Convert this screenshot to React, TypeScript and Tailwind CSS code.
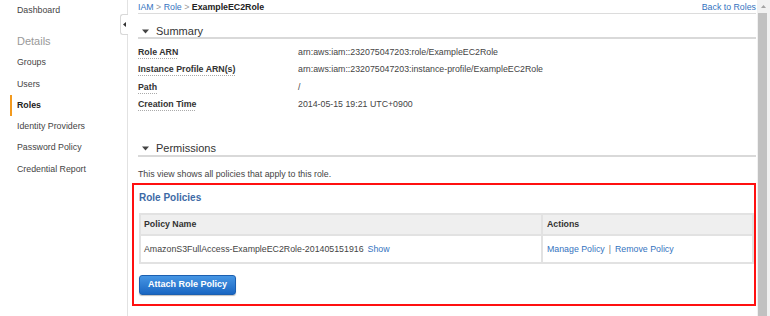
import { ReactNode } from "react";

const navItems = ["Groups", "Users", "Roles", "Identity Providers", "Password Policy", "Credential Report"];

const summaryRows = [
  { label: "Role ARN", value: "arn:aws:iam::232075047203:role/ExampleEC2Role" },
  { label: "Instance Profile ARN(s)", value: "arn:aws:iam::232075047203:instance-profile/ExampleEC2Role" },
  { label: "Path", value: "/" },
  { label: "Creation Time", value: "2014-05-15 19:21 UTC+0900" },
];

function Caret() {
  return (
    <svg width="7" height="5" viewBox="0 0 7 5" className="mr-[7px] ml-[4px]">
      <polygon points="0,0.5 7,0.5 3.5,4.5" fill="#444" />
    </svg>
  );
}

function SectionHeading({ children, className }: { children: ReactNode; className: string }) {
  return (
    <div className={`flex items-end border-b-2 border-[#d9d9d9] ${className}`}>
      <div className="flex items-center text-[11px] leading-[12px] text-[#333]">
        <Caret />
        {children}
      </div>
    </div>
  );
}

function Sidebar() {
  return (
    <aside className="relative w-[128px] shrink-0 border-r border-[#e2e2e2] bg-white text-[8.8px] text-[#444]">
      <div className="pl-[17px] leading-[21px]">Dashboard</div>
      <div className="mt-[10px] pl-[17px] text-[11px] leading-[21.3px] text-[#999]">Details</div>
      {navItems.map((item) =>
        item === "Roles" ? (
          <div key={item} className="ml-[10px] border-l-2 border-[#f39a1e] pl-[5px] font-bold leading-[21.3px] text-[#222]">
            {item}
          </div>
        ) : (
          <div key={item} className="pl-[17px] leading-[21.3px]">
            {item}
          </div>
        )
      )}
      {/* collapse tab on the border */}
      <div className="absolute right-[-1px] top-[14px] flex h-[21px] w-[8px] items-center justify-center rounded-l-[3px] border border-r-0 border-[#d8d8d8] bg-white">
        <svg width="3" height="5" viewBox="0 0 3 5">
          <polygon points="3,0 3,5 0,2.5" fill="#333" />
        </svg>
      </div>
    </aside>
  );
}

function Scrollbar() {
  return (
    <div className="flex w-[13px] shrink-0 flex-col bg-[#f1f1f1]">
      <div className="flex h-[12px] items-center justify-center">
        <svg width="5" height="3" viewBox="0 0 5 3">
          <polygon points="0,3 5,3 2.5,0" fill="#a3a3a3" />
        </svg>
      </div>
      <div className="ml-[1px] mr-[3px] mt-[1px] flex-1 bg-[#c1c1c1]" />
    </div>
  );
}

export default function App() {
  return (
    <div className="flex h-[316px] w-[770px] overflow-hidden bg-white font-['Liberation_Sans',Arial,sans-serif]">
      <Sidebar />

      <main className="flex-1 pl-[10px] pr-[1px]">
        {/* breadcrumb */}
        <div className="flex h-[14px] items-start justify-between border-b border-[#dcdcdc] pt-[1px] text-[8.8px] leading-[12px]">
          <div>
            <span className="text-[#3473c0]">IAM</span>
            <span className="text-[#999]"> &gt; </span>
            <span className="text-[#3473c0]">Role</span>
            <span className="text-[#999]"> &gt; </span>
            <span className="font-bold text-[#222]">ExampleEC2Role</span>
          </div>
          <span className="text-[#3473c0]">Back to Roles</span>
        </div>

        <SectionHeading className="h-[25px]">Summary</SectionHeading>

        <div className="pt-[5px] text-[8.8px] leading-[17.3px]">
          {summaryRows.map((row) => (
            <div key={row.label} className="flex">
              <div className="w-[160px] font-bold text-[#333]">
                <span className="underline decoration-[#aaa] decoration-dotted underline-offset-[3px]">{row.label}</span>
              </div>
              <div className="text-[#444]">{row.value}</div>
            </div>
          ))}
        </div>

        <SectionHeading className="h-[44px] pb-[1px]">Permissions</SectionHeading>

        <p className="mt-[11px] text-[8.8px] leading-[12px] text-[#444]">This view shows all policies that apply to this role.</p>

        {/* highlighted role policies block */}
        <div className="-ml-[6px] mt-[3px] h-[123px] border-[2.5px] border-[#ff1010] pl-[5px] pt-[7px]">
          <div className="text-[10px] font-bold leading-[12px] text-[#3d6aa6]">Role Policies</div>

          <div className="mt-[9px] border-2 border-[#e2e2e2] text-[8.8px]">
            <div className="flex h-[19px] items-center bg-[#efefef] font-bold text-[#333]">
              <div className="w-[400px] pl-[3px]">Policy Name</div>
              <div className="flex h-full items-center border-l-2 border-[#e2e2e2] pl-[4px]">Actions</div>
            </div>
            <div className="flex h-[28px] items-center border-t-2 border-[#e2e2e2] text-[#444]">
              <div className="w-[400px] pl-[3px]">
                AmazonS3FullAccess-ExampleEC2Role-201405151916
                <span className="ml-[4px] text-[#3473c0]">Show</span>
              </div>
              <div className="flex h-full items-center border-l-2 border-[#e2e2e2] pl-[4px]">
                <span className="text-[#3473c0]">Manage Policy</span>
                <span className="mx-[4px] text-[#777]">|</span>
                <span className="text-[#3473c0]">Remove Policy</span>
              </div>
            </div>
          </div>

          <button className="mt-[11px] h-[20px] w-[97px] rounded-[3px] border border-[#1b5fb0] bg-gradient-to-b from-[#4696e4] to-[#1966c2] text-[9px] font-bold text-white shadow-[0_1px_1px_rgba(0,0,0,0.25)]">
            Attach Role Policy
          </button>
        </div>
      </main>

      <Scrollbar />
    </div>
  );
}
